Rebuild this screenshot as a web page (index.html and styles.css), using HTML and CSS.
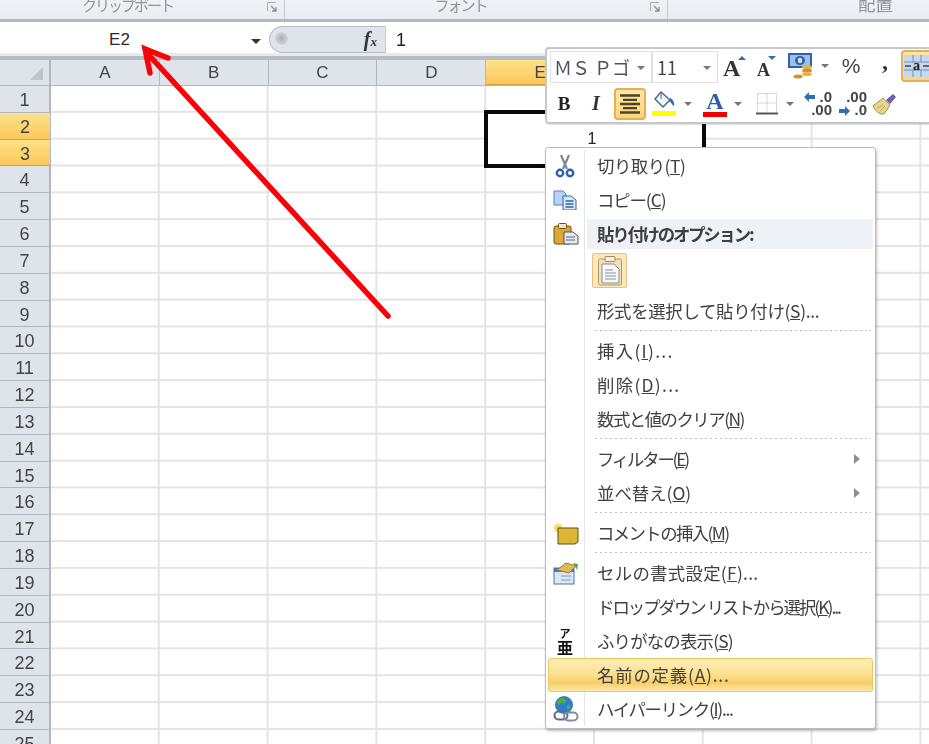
FILE: index.html
```html
<!DOCTYPE html>
<html lang="ja">
<head>
<meta charset="utf-8">
<title>Excel</title>
<link rel="stylesheet" href="styles.css">
</head>
<body>
<div class="app">
  <div class="ribbon">
    <div class="group g1"><span class="glabel kana">クリップボート</span><svg class="launch" viewBox="0 0 12 12"><path d="M1.500 10V1.500H10" fill="none" stroke="#a8adb3"/><path d="M5 5l5 5M10 6v4H6" fill="none" stroke="#8b9097" stroke-width="1.300"/></svg></div>
    <div class="group g2"><span class="glabel kana">フォント</span><svg class="launch" viewBox="0 0 12 12"><path d="M1.500 10V1.500H10" fill="none" stroke="#a8adb3"/><path d="M5 5l5 5M10 6v4H6" fill="none" stroke="#8b9097" stroke-width="1.300"/></svg></div>
    <div class="group g3"><span class="glabel large">配置</span></div>
  </div>
  <div class="fbar">
    <div class="namebox"><span class="nametext">E2</span><span class="namearrow"></span></div>
    <div class="pill"><span class="knob"></span><span class="fx">f<small>x</small></span></div>
    <div class="finput">1</div>
  </div>
  <div class="colhead">
    <div class="corner"><span class="tri"></span></div>
    <div class="col">A</div><div class="col">B</div><div class="col">C</div><div class="col">D</div><div class="col sel">E</div><div class="col">F</div><div class="col">G</div><div class="col">H</div>
  </div>
  <div class="sheet">
    <div class="rowhead">
      <div class="row">1</div><div class="row sel">2</div><div class="row sel">3</div><div class="row">4</div><div class="row">5</div>
      <div class="row">6</div><div class="row">7</div><div class="row">8</div><div class="row">9</div><div class="row">10</div>
      <div class="row">11</div><div class="row">12</div><div class="row">13</div><div class="row">14</div><div class="row">15</div>
      <div class="row">16</div><div class="row">17</div><div class="row">18</div><div class="row">19</div><div class="row">20</div>
      <div class="row">21</div><div class="row">22</div><div class="row">23</div><div class="row">24</div><div class="row">25</div>
    </div>
    <div class="cells"></div>
  </div>

  <div class="selection"><span class="cellvalue">1</span></div>

  <div class="mini">
    <div class="minirow">
      <div class="combo c-font"><span class="ctext">ＭＳ Ｐゴ</span><i class="dd"></i></div>
      <div class="combo c-size"><span class="ctext">11</span><i class="dd"></i></div>
      <span class="tool w-grow"><svg width="26" height="24" viewBox="0 0 26 24"><text x="1" y="22" class="aglyph big">A</text><path d="M16 6l4-4 4 4z" fill="#2f6db5"/></svg></span>
      <span class="tool w-shrink"><svg width="24" height="24" viewBox="0 0 24 24"><text x="2" y="22" class="aglyph small">A</text><path d="M13 2h8l-4 4z" fill="#2f6db5"/></svg></span>
      <span class="tool w-cur"><svg width="27" height="26" viewBox="0 0 27 26"><rect x="1" y="0" width="24" height="15" fill="#2f62ad"/><rect x="3" y="2" width="20" height="11" fill="#9fbfe6"/><ellipse cx="13" cy="7.500" rx="5" ry="4.500" fill="#2f62ad"/><ellipse cx="13" cy="7.500" rx="2.200" ry="2.800" fill="#cfe0f4"/><ellipse cx="20" cy="14" rx="5" ry="2" fill="#eab33e"/><ellipse cx="20" cy="17.500" rx="5" ry="2" fill="#cf932a"/><ellipse cx="20" cy="21" rx="5" ry="2" fill="#eab33e"/><ellipse cx="11" cy="23.500" rx="4.500" ry="2" fill="#cf932a"/></svg></span>
      <i class="dd gap-cur"></i>
      <span class="tool w-pct">%</span>
      <span class="tool w-comma">,</span>
      <span class="tool w-wrap on"><svg width="26" height="24" viewBox="0 0 26 24"><rect x="0" y="1" width="26" height="22" fill="#c7d7ec"/><path d="M0 8h26M0 16h26M9 1v7M17 1v7M9 16v7M17 16v7" stroke="#6f8fbd"/><path d="M1 12h6M19 12h6" stroke="#37475f" stroke-width="1.500"/><text x="9" y="16" class="wrapa">a</text></svg></span>
    </div>
    <div class="minirow">
      <span class="tool w-b">B</span>
      <span class="tool w-i">I</span>
      <span class="tool w-center on"><svg width="24" height="22" viewBox="0 0 24 22"><path d="M2 2.500h20M5 6.800h14M2 11h20M5 15.200h14M2 19.500h20" stroke="#4d4326" stroke-width="2.300"/></svg></span>
      <span class="tool w-fill"><svg width="24" height="27" viewBox="0 0 24 27"><path d="M9 2l9 8-7 7-8-8z" fill="#f4f6f9" stroke="#4f6a8e" stroke-width="1.500"/><path d="M9 2v7" stroke="#4f6a8e"/><path d="M18 8c3 1 5 5 4 8-2-1-3-4-5-5z" fill="#2f6fc0"/><rect x="0" y="21" width="24" height="5" fill="#ffff00"/></svg></span>
      <i class="dd gap-fill"></i>
      <span class="tool w-color"><span class="colorA">A</span></span>
      <i class="dd gap-color"></i>
      <span class="tool w-border"><svg width="22" height="24" viewBox="0 0 22 24"><path d="M1.500 1.500h19v19M1.500 1.500v19M11 1.500v19M1.500 11h19" fill="none" stroke="#c4c7cb" stroke-dasharray="2 1"/><path d="M0 21.500h22" stroke="#555" stroke-width="2"/></svg></span>
      <i class="dd gap-border"></i>
      <span class="tool w-dec"><span class="decnum one">.0</span><span class="decnum two">.00</span><svg class="decarrow left" width="11" height="10" viewBox="0 0 11 10"><path d="M0 5L5 0v3h6v4H5v3z" fill="#2f6db5"/></svg></span>
      <span class="tool w-dec second"><span class="decnum one">.00</span><span class="decnum two">.0</span><svg class="decarrow right" width="11" height="10" viewBox="0 0 11 10"><path d="M11 5L6 0v3H0v4h6v3z" fill="#2f6db5"/></svg></span>
      <span class="tool w-brush"><svg width="26" height="24" viewBox="0 0 26 24"><path d="M1 14l10-8 7 7-6 9C8 23 3 19 1 14z" fill="#e9d58d" stroke="#a58d4d"/><path d="M5 16l6-3M8 19l5-5" stroke="#c2a653"/><path d="M14 8l7-6 3 3-6 7z" fill="#6b5fa8"/></svg></span>
    </div>
  </div>

  <div class="menu">
    <div class="gutter"></div>
    <div class="item"><span class="ico"><svg width="24" height="24" viewBox="0 0 24 24"><path d="M8 1l6 14M16 1l-6 14" stroke="#7f8690" stroke-width="2.200" fill="none"/><circle cx="7" cy="19" r="3.200" fill="none" stroke="#2d5fae" stroke-width="2.400"/><circle cx="17" cy="19" r="3.200" fill="none" stroke="#2d5fae" stroke-width="2.400"/></svg></span><span class="label ls-a">切り取り(<u>T</u>)</span></div>
    <div class="item"><span class="ico"><svg width="24" height="20" viewBox="0 0 24 20"><path d="M1 1h9l3 3v11H1z" fill="#b9d2f0" stroke="#4f83c9"/><path d="M10 6h8l5 4v10H10z" fill="#dde9f8" stroke="#2f63ad"/><path d="M12.500 11h8M12.500 14h8M12.500 17h8" stroke="#2f63ad" stroke-width="1.500"/></svg></span><span class="label ls-b">コピー(<u>C</u>)</span></div>
    <div class="item head"><span class="ico"><svg width="26" height="22" viewBox="0 0 26 22"><rect x="1" y="3" width="17" height="18" rx="2" fill="#dca82f" stroke="#6e4f12"/><rect x="5.500" y="0.500" width="8" height="5" rx="1" fill="#efe4c6" stroke="#6e4f12"/><path d="M11 9h9l5 4v8H11z" fill="#e6eaf0" stroke="#4b5568"/><path d="M13 14h9M13 17h9" stroke="#5b6577"/></svg></span><span class="label ls-c">貼り付けのオプション:</span></div>
    <div class="pasterow"><span class="pastebtn"><svg width="26" height="30" viewBox="0 0 26 30"><rect x="1.500" y="3" width="23" height="26" rx="1.500" fill="#f2e0b5" stroke="#b39a63"/><rect x="8" y="0.500" width="10" height="5" rx="1" fill="#f7f0dd" stroke="#9a8a68"/><path d="M5 8h12l5 5v14H5z" fill="#f7f8fa" stroke="#8a8f97"/><path d="M8 14h8M8 17h11M8 20h11M8 23h11" stroke="#8a8f97"/></svg></span></div>
    <div class="item"><span class="label ls-d">形式を選択して貼り付け(<u>S</u>)...</span></div>
    <div class="sep"></div>
    <div class="item"><span class="label ls-e">挿入(<u>I</u>)...</span></div>
    <div class="item"><span class="label ls-e">削除(<u>D</u>)...</span></div>
    <div class="item"><span class="label ls-f">数式と値のクリア(<u>N</u>)</span></div>
    <div class="sep"></div>
    <div class="item"><span class="label ls-c">フィルター(<u>E</u>)</span><i class="sub"></i></div>
    <div class="item"><span class="label">並べ替え(<u>O</u>)</span><i class="sub"></i></div>
    <div class="sep"></div>
    <div class="item"><span class="ico"><svg width="26" height="24" viewBox="0 0 26 24"><path d="M5 1l1 3 3-1-1 3 3 1-3 1 1 3-3-1-1 3-1-3-3 1 1-3-3-1 3-1-1-3 3 1z" fill="#f5dc55"/><path d="M5 7h20v14l-3 2H5z" fill="#dcb636" stroke="#5f4e14"/></svg></span><span class="label ls-g">コメントの挿入(<u>M</u>)</span></div>
    <div class="sep"></div>
    <div class="item"><span class="ico"><svg width="26" height="24" viewBox="0 0 26 24"><rect x="1" y="7" width="20" height="16" fill="#dbe6f3" stroke="#4b77ae"/><rect x="1" y="7" width="20" height="4" fill="#4b77ae"/><path d="M8 15h10M8 19h10" stroke="#7f9cc4"/><path d="M4 9l9-7 10 3-7 7z" fill="#e2b95a" stroke="#9b7a2b"/><path d="M20 2l5 1-1 6z" fill="#5ba84f"/></svg></span><span class="label ls-h">セルの書式設定(<u>F</u>)...</span></div>
    <div class="item"><span class="label ls-i">ドロップダウン リストから選択(<u>K</u>)...</span></div>
    <div class="item"><span class="ico furi"><span class="furi-a">ア</span><span class="furi-b">亜</span></span><span class="label ls-j">ふりがなの表示(<u>S</u>)</span></div>
    <div class="item hot"><span class="label ls-k">名前の定義(<u>A</u>)...</span></div>
    <div class="item"><span class="ico"><svg width="26" height="26" viewBox="0 0 26 26"><circle cx="11" cy="9" r="9" fill="#2f7ccb"/><path d="M6 3c3-2 6-1 7 1s-2 4-4 3-2 4-4 2-1-4 1-6zM14 9c2-1 4 0 3 3s-3 2-3 0z" fill="#4fae3f"/><rect x="1.500" y="15.500" width="13" height="8" rx="4" fill="none" stroke="#5c6c85" stroke-width="2"/><rect x="11" y="16.500" width="13.500" height="8" rx="4" fill="none" stroke="#7e8ca3" stroke-width="2"/></svg></span><span class="label ls-l">ハイパーリンク(<u>I</u>)...</span></div>
  </div>

  <svg class="arrow" width="929" height="744" viewBox="0 0 929 744"><path d="M388 316L147 53M150 73L145 49L168 58" fill="none" stroke="#fb0007" stroke-width="5.500" stroke-linecap="round" stroke-linejoin="miter"/></svg>
</div>
</body>
</html>
```
FILE: styles.css
```css
* { box-sizing: border-box; }
html, body { margin: 0; padding: 0; background: #fff; }
body { width: 929px; height: 744px; overflow: hidden; }
.app {
  position: relative;
  width: 929px;
  height: 744px;
  overflow: hidden;
  font-family: "Liberation Sans", "Noto Sans CJK JP", sans-serif;
  filter: blur(0.45px);
}

/* ribbon */
.ribbon {
  display: flex;
  height: 22px;
  border-bottom: 3px solid #b4b9bf;
  background: linear-gradient(#eef1f5, #e9edf2);
  overflow: hidden;
}
.group {
  position: relative;
  display: flex;
  justify-content: center;
  border-right: 1px solid #c5cad0;
}
.g1 { width: 285px; }
.g2 { width: 383px; }
.g3 { flex: 1; border-right: 0; padding-left: 190px; justify-content: flex-start; }
.glabel {
  font: 15px/1 "Noto Sans CJK JP", sans-serif;
  color: #909499;
  margin-top: -3px;
  white-space: nowrap;
}
.glabel.kana { letter-spacing: -2px; }
.glabel.large { font-size: 17.500px; margin-top: -5px; }
.g1 .glabel { margin-right: 29px; }
.g2 .glabel { margin-right: 31px; }
.launch { position: absolute; right: 6px; top: 1px; width: 12px; height: 12px; }

/* formula bar */
.fbar {
  display: flex;
  height: 38px;
  padding-top: 4px;
  padding-bottom: 3px;
  background: #fff;
  border-bottom: 4px solid #b7bcc3;
  box-shadow: inset 0 -3px 0 #e7eaee;
}
.namebox {
  position: relative;
  width: 269px;
  display: flex;
  align-items: center;
  justify-content: center;
  padding-right: 30px;
  background: #fff;
  font-size: 17px;
  color: #2b2b2b;
}
.namearrow {
  position: absolute;
  right: 8px;
  top: 13px;
  border: 5px solid transparent;
  border-top: 5px solid #333;
  border-bottom: 0;
}
.pill {
  position: relative;
  width: 116px;
  background: #dfe3ea;
  border: 1px solid #b7bdc6;
  border-right: 0;
  border-radius: 14px 0 0 14px;
}
.knob {
  position: absolute;
  left: 5px;
  top: 5px;
  width: 13px;
  height: 13px;
  border-radius: 50%;
  background: radial-gradient(#a9adb3, #e5e7ea);
}
.fx {
  position: absolute;
  right: 8px;
  top: 0;
  font: italic bold 20px/25px "Liberation Serif", serif;
  color: #333;
}
.fx small { font-size: 13px; }
.finput {
  flex: 1;
  border-left: 1px solid #c8ccd2;
  padding-left: 10px;
  font-size: 18px;
  line-height: 29px;
  color: #222;
}

/* sheet header */
.colhead {
  display: flex;
  height: 26px;
  background: #dfe3ea;
  border-bottom: 1px solid #b1b7c1;
}
.corner {
  position: relative;
  width: 51px;
  flex: none;
  border-right: 2px solid #b1b7c1;
}
.tri {
  position: absolute;
  right: 6px;
  bottom: 5px;
  border-left: 13px solid transparent;
  border-bottom: 13px solid #bfc4cb;
}
.col {
  width: 108.800px;
  flex: none;
  border-right: 1px solid #b1b7c1;
  text-align: center;
  font-size: 17px;
  line-height: 26px;
  color: #444;
}
.col.sel {
  background: linear-gradient(#fde28a, #fbc85a);
  border-bottom: 1px solid #d99f3e;
}

/* sheet */
.sheet { display: flex; height: 680px; }
.rowhead { width: 51px; flex: none; border-right: 2px solid #b1b7c1; background: #dfe3ea; }
.row {
  height: 26.830px;
  border-bottom: 1px solid #b1b7c1;
  text-align: center;
  font-size: 18px;
  line-height: 29px;
  color: #444;
}
.row.sel { background: linear-gradient(#fde28a, #fbc85a); border-bottom-color: #d99f3e; margin-right: -1px; }
.cells {
  flex: 1;
  background-color: #fff;
  background-image:
    linear-gradient(to right, transparent 106.800px, #e3e4e6 106.800px),
    linear-gradient(to bottom, transparent 24.830px, #e3e4e6 24.830px);
  background-size: 108.800px 26.830px;
}

/* merged selection */
.selection {
  position: absolute;
  left: 484px;
  top: 110px;
  width: 222px;
  height: 58px;
  border: 4px solid #0a0a0a;
  background: #fff;
  text-align: center;
  font-size: 16px;
  line-height: 50px;
  color: #222;
}
.cellvalue { position: relative; left: -3px; }

/* mini toolbar */
.mini {
  position: absolute;
  left: 545px;
  top: 47px;
  width: 420px;
  height: 77px;
  padding: 0 3px;
  display: flex;
  flex-direction: column;
  gap: 5px;
  background: #fff;
  border: 2px solid #c4c7cc;
  border-radius: 4px;
  box-shadow: 1px 1px 1px rgba(0,0,0,.12);
}
.minirow { display: flex; align-items: center; height: 33px; }
.combo {
  position: relative;
  height: 32px;
  margin-top: 3px;
  border: 1px solid #dfe1e4;
  display: flex;
  align-items: center;
  font: 18px/1 "Noto Sans CJK JP", sans-serif;
  color: #444;
}
.combo .ctext { padding-left: 3px; white-space: nowrap; }
.c-font { width: 102px; }
.c-font .ctext { color: #4a5160; }
.c-size { width: 66px; }
.c-size .ctext { padding-left: 4px; }
.combo .dd { position: absolute; right: 6px; top: 14px; }
.dd {
  display: block;
  flex: none;
  border: 4px solid transparent;
  border-top: 4px solid #777;
  border-bottom: 0;
}
.tool { display: flex; align-items: center; justify-content: center; flex: none; height: 32px; }
.tool.on {
  background: linear-gradient(#fde7a6, #f9d57e);
  border: 2px solid #e4b053;
  border-radius: 4px;
}
.aglyph { font-family: "Liberation Serif", serif; font-weight: 700; fill: #333; }
.aglyph.big { font-size: 24px; }
.aglyph.small { font-size: 18px; }
.wrapa { font: 700 14px "Liberation Serif", serif; fill: #222; }
.w-grow { width: 32px; margin-left: 1px; }
.w-shrink { width: 32px; }
.w-cur { width: 30px; margin-left: 2px; }
.gap-cur { margin-left: 6px; }
.w-pct { width: 50px; font-size: 21px; color: #444; margin-left: -3px; }
.w-comma { width: 18px; font: 700 24px/1 "Liberation Serif", serif; color: #333; padding-bottom: 10px; }
.w-wrap { width: 32px; margin-left: 7px; }
.w-b { width: 28px; font: 700 19px "Liberation Serif", serif; color: #222; }
.w-i { width: 36px; font: italic 700 20px "Liberation Serif", serif; color: #333; }
.w-center { width: 32px; }
.w-fill { width: 36px; }
.gap-fill { margin-left: 2px; }
.w-color { width: 38px; margin-left: 4px; }
.colorA {
  display: block;
  width: 24px;
  height: 26px;
  text-align: center;
  font: 700 24px/20px "Liberation Serif", serif;
  color: #2b5ea8;
  border-bottom: 5px solid #f00000;
}
.w-border { width: 36px; margin-left: 7px; }
.gap-border { margin-left: 1px; }
.w-dec { position: relative; width: 34px; margin-left: 9px; font-weight: 700; color: #444; font-size: 15px; }
.w-dec.second { margin-left: 1px; }
.decnum { position: absolute; right: 5px; line-height: 13px; }
.decnum.one { top: 2px; }
.decnum.two { top: 15px; }
.decarrow { position: absolute; top: 4px; left: 1px; }
.decarrow.right { top: 18px; left: 1px; }
.w-brush { width: 32px; margin-left: -3px; }

/* context menu */
.menu {
  position: absolute;
  left: 545px;
  top: 147px;
  width: 331px;
  height: 582px;
  padding: 1px 2px;
  background: #fff;
  border: 1px solid #b9bcc1;
  border-radius: 3px;
  box-shadow: 1px 2px 3px rgba(0,0,0,.25);
}
.gutter {
  position: absolute;
  left: 38px;
  top: 2px;
  bottom: 2px;
  width: 1px;
  background: #e4e7ea;
}
.item {
  position: relative;
  height: 34px;
  display: flex;
  align-items: center;
  padding-left: 49px;
  font: 17.400px/1 "Noto Sans CJK JP", sans-serif;
  color: #404040;
  white-space: nowrap;
}
.label { position: relative; }
.ls-a { letter-spacing: -0.5px; }
.ls-b { letter-spacing: -1.1px; }
.ls-c { letter-spacing: -2.2px; }
.ls-d { letter-spacing: -0.3px; }
.ls-e { letter-spacing: 1.300px; }
.ls-f { letter-spacing: -1.5px; }
.ls-g { letter-spacing: -1.6px; }
.ls-h { letter-spacing: 0.3px; }
.ls-i { letter-spacing: -2px; }
.ls-j { letter-spacing: -0.8px; }
.ls-k { letter-spacing: 0.8px; }
.ls-l { letter-spacing: -1.3px; }
.ico {
  position: absolute;
  left: 5px;
  top: 50%;
  transform: translateY(-50%);
  display: flex;
  align-items: center;
}
.head {
  height: 30px;
  margin: 2px 0 0 39px;
  padding-left: 10px;
  background: #eef1f5;
  font-weight: 700;
  color: #3f3f3f;
}
.head .ico { left: -34px; }
.pasterow { height: 45px; padding: 4px 0 0 44px; }
.pastebtn {
  display: flex;
  align-items: center;
  justify-content: center;
  width: 35px;
  height: 35px;
  background: #fde7bd;
  border: 1px solid #e6c47f;
  border-radius: 2px;
}
.sep {
  height: 6px;
  margin-left: 47px;
  margin-right: 2px;
  background: repeating-linear-gradient(to right, #bcbec2 0 2px, transparent 2px 5px) 0 2px / 100% 1px no-repeat;
}
.hot {
  background: linear-gradient(#fdeeb8 0%, #fcdf8e 50%, #f8cd68 75%, #fde9a8 100%);
  border: 1px solid #f0c657;
  border-radius: 3px;
  padding-left: 48px;
}
.sub {
  position: absolute;
  right: 13px;
  top: 12px;
  border: 5px solid transparent;
  border-left: 6px solid #8b8e92;
  border-right: 0;
}
.furi {
  flex-direction: column;
  left: 9px;
  color: #111;
  font-weight: 700;
  line-height: 1;
}
.furi-a { font-size: 11px; height: 11px; }
.furi-b { font-size: 16px; }
.arrow { position: absolute; left: 0; top: 0; pointer-events: none; }
```
